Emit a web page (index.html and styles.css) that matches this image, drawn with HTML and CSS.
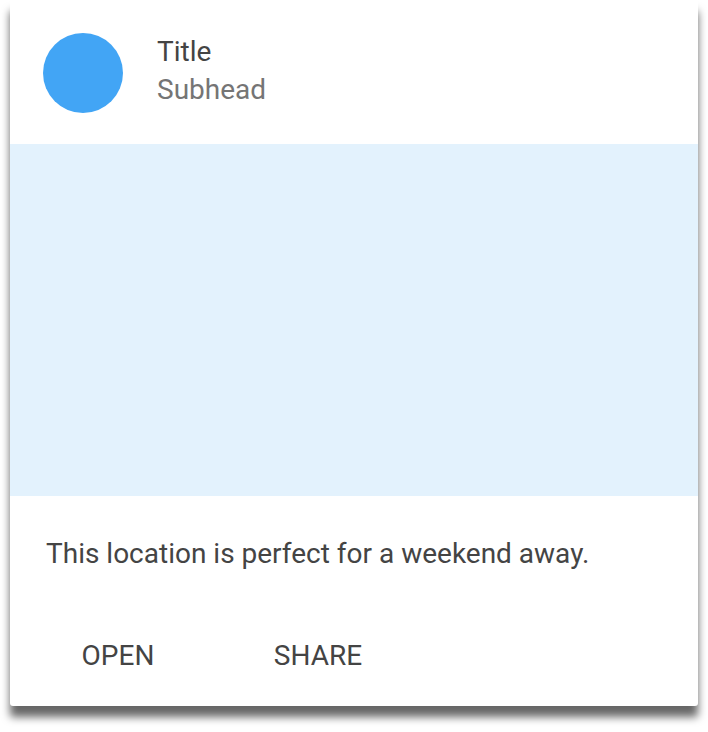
FILE: index.html
```html
<!DOCTYPE html>
<html>
<head>
<meta charset="utf-8">
<link rel="stylesheet" href="styles.css">
</head>
<body>
<div class="card">
  <div class="card-header">
    <div class="avatar"></div>
    <div class="header-text">
      <div class="title">Title</div>
      <div class="subhead">Subhead</div>
    </div>
  </div>
  <div class="media"></div>
  <div class="supporting">This location is perfect for a weekend away.</div>
  <div class="actions">
    <button class="btn">OPEN</button>
    <button class="btn">SHARE</button>
  </div>
</div>
</body>
</html>
```
FILE: styles.css
```css
html, body {
  margin: 0;
  padding: 0;
  background: #ffffff;
}
body {
  font-family: Roboto, "Liberation Sans", sans-serif;
  padding-bottom: 26px;
}
.card {
  margin-left: 10px;
  width: 688px;
  background: #ffffff;
  border-radius: 3px;
  box-shadow: 0 11px 9px rgba(0, 0, 0, 0.6);
}
.card-header {
  display: flex;
  align-items: flex-start;
  padding: 33px 32px 31px 33px;
}
.avatar {
  width: 80px;
  height: 80px;
  border-radius: 50%;
  background: #42a5f5;
  flex: none;
}
.header-text {
  margin-left: 34px;
  display: flex;
  flex-direction: column;
}
.title {
  font-size: 28px;
  line-height: 38px;
  color: #444444;
}
.subhead {
  font-size: 28px;
  line-height: 38px;
  color: #757575;
}
.media {
  height: 352px;
  background: #e3f2fd;
}
.supporting {
  padding: 38px 36px 31px 36px;
  font-size: 28px;
  line-height: 40px;
  color: #444444;
}
.actions {
  display: flex;
  gap: 24px;
  padding: 11px 20px 10px 20px;
}
.btn {
  width: 176px;
  height: 80px;
  border: none;
  background: transparent;
  font-family: Roboto, "Liberation Sans", sans-serif;
  font-size: 28px;
  line-height: 40px;
  color: #444444;
  padding: 0;
}
```
